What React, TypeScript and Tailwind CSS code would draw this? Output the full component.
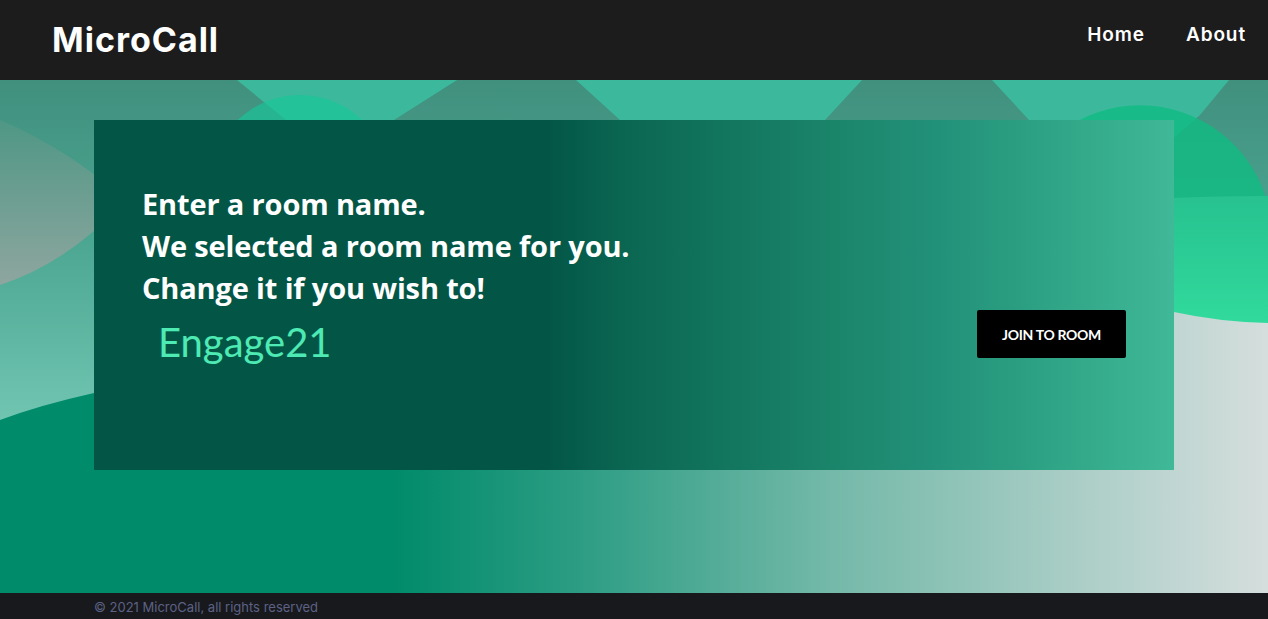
export default function App() {
  return (
    <div className="flex min-h-screen flex-col bg-[#18191d]">
      <Header />
      <main className="relative h-[513px] overflow-hidden">
        <Backdrop />
        <RoomCard />
      </main>
      <footer className="flex h-[26px] items-center bg-[#18191d] px-[94px] pt-[4px]">
        <span className="font-['Inter',sans-serif] text-[13px] text-[#5c6284]">
          © 2021 MicroCall, all rights reserved
        </span>
      </footer>
    </div>
  );
}

function Header() {
  return (
    <header className="flex h-20 items-start justify-between bg-[#1c1c1c] pl-[52px] pr-[22px] font-['Inter',sans-serif] text-white">
      <h1 className="mt-[18px] text-[34px] font-bold leading-[44px] tracking-[1px]">
        MicroCall
      </h1>
      <nav className="mt-[22px] flex gap-[41px] text-[19px] font-semibold leading-[26px] tracking-[0.9px]">
        <a href="#">Home</a>
        <a href="#">About</a>
      </nav>
    </header>
  );
}

function RoomCard() {
  return (
    <section className="relative z-10 mx-[94px] mt-10 flex h-[350px] justify-between bg-[linear-gradient(90deg,#035646_0%,#035646_42%,#0b6853_50%,#1c876c_70%,#22917a_78%,#2a9d80_85%,#40b998_100%)] pl-[48px] pr-12 pt-[63px]">
      <div>
        <h2 className="font-['Open_Sans',sans-serif] text-[29px] font-bold leading-[42px] tracking-[-0.15px] text-white">
          Enter a room name.
          <br />
          We selected a room name for you.
          <br />
          Change it if you wish to!
        </h2>
        <input
          className="mt-[6px] ml-4 w-[400px] bg-transparent font-['Lato',sans-serif] text-[40px] leading-[54px] text-[#4eeab4] outline-none"
          defaultValue="Engage21"
        />
      </div>
      <button className="mt-[127px] h-12 w-[149px] rounded-[2px] bg-black font-['Lato',sans-serif] text-[14px] font-bold tracking-[-0.3px] text-white">
        JOIN TO ROOM
      </button>
    </section>
  );
}

function Backdrop() {
  return (
    <svg
      className="absolute inset-0 h-full w-full"
      viewBox="0 80 1268 513"
      preserveAspectRatio="none"
    >
      <defs>
        <linearGradient id="base" x1="0" y1="0" x2="1" y2="0">
          <stop offset="0" stopColor="#008b6b" />
          <stop offset="0.31" stopColor="#008b6b" />
          <stop offset="0.45" stopColor="#2a9c82" />
          <stop offset="0.65" stopColor="#72b8a8" />
          <stop offset="1" stopColor="#d5dedd" />
        </linearGradient>
        <linearGradient id="wave" x1="0" y1="80" x2="0" y2="420" gradientUnits="userSpaceOnUse">
          <stop offset="0" stopColor="#41907e" />
          <stop offset="0.45" stopColor="#4aa590" />
          <stop offset="1" stopColor="#70c5b1" />
        </linearGradient>
        <linearGradient id="grey" x1="0" y1="120" x2="0" y2="285" gradientUnits="userSpaceOnUse">
          <stop offset="0" stopColor="#4f9785" />
          <stop offset="1" stopColor="#8ea69f" />
        </linearGradient>
        <linearGradient id="mint" x1="0" y1="200" x2="0" y2="323" gradientUnits="userSpaceOnUse">
          <stop offset="0" stopColor="#27c290" />
          <stop offset="1" stopColor="#31da9c" />
        </linearGradient>
      </defs>
      <rect x="0" y="80" width="1268" height="513" fill="url(#base)" />
      <path d="M0,80 H1268 V260 L1174,300 Q600,335 94,393 Q40,405 0,420 Z" fill="url(#wave)" />
      <path d="M0,120 Q70,150 125,200 Q70,262 0,285 Z" fill="url(#grey)" />
      <polygon points="237,80 457,80 394,120 360,150 310,150 286,120" fill="#3cb99c" />
      <polygon points="576,80 862,80 825,120 800,150 640,150 620,120" fill="#3cb99c" />
      <polygon points="992,80 1229,80 1200,115 1160,150 1060,150 1029,120" fill="#3cb99c" />
      <circle cx="300" cy="185" r="90" fill="#17c698" opacity="0.65" />
      <path d="M1012,205 A132,132 0 0,1 1268,205 Z" fill="#0fbc82" opacity="0.8" />
      <path d="M1060,205 Q1170,196 1268,196 V323 Q1220,322 1174,312 Q1100,295 1060,280 Z" fill="url(#mint)" />
    </svg>
  );
}
